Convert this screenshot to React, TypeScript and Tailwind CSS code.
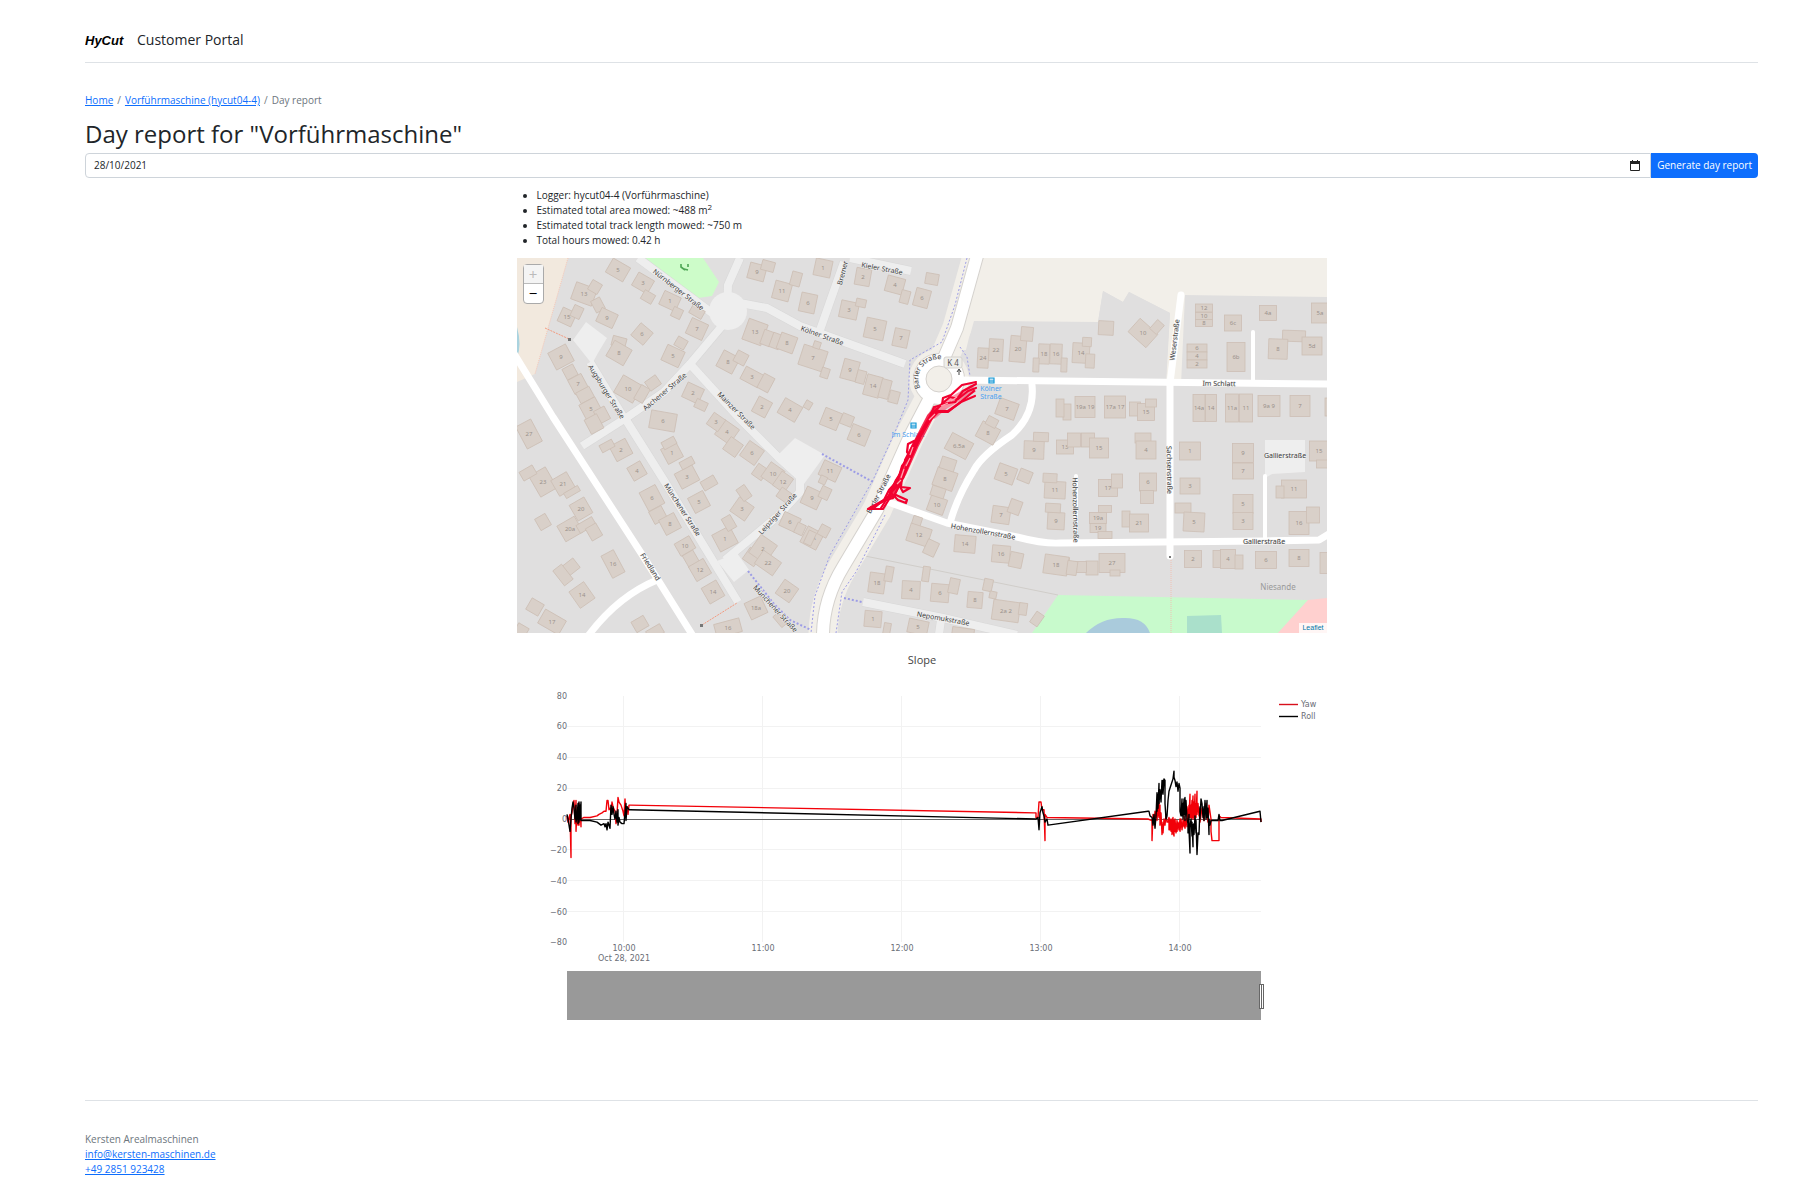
import React from 'react';

// x, y, width, height, rotation, house number
type Building = [number, number, number, number, number, string?];

const buildings: Building[] = [
  [618, 270, 20, 16, 30, '5'], [584, 294, 22, 18, 20, '13'], [595, 287, 11, 11, 30], [643, 283, 18, 15, 30, '3'],
  [648, 297, 12, 10, 30], [598, 305, 10, 13, -28], [607, 318, 18, 15, 25, '9'], [567, 317, 15, 15, 25, '15'],
  [577, 312, 10, 12, 25], [670, 301, 18, 15, 25, '1'], [677, 313, 10, 10, 25], [697, 312, 14, 9, 30],
  [697, 329, 18, 17, 25, '7'], [642, 334, 16, 16, 40, '6'], [619, 342, 14, 10, 15], [619, 353, 20, 18, 30, '8'],
  [681, 343, 11, 10, 30], [673, 356, 19, 17, 25, '5'], [561, 357, 20, 19, -28, '9'], [570, 372, 12, 12, -28],
  [578, 384, 15, 16, -28, '7'], [585, 395, 15, 12, -28], [591, 409, 18, 18, -28, '5'], [602, 415, 12, 14, -28],
  [628, 389, 22, 20, 30, '10'], [642, 394, 10, 16, 30], [653, 383, 13, 11, -35], [693, 393, 18, 16, 25, '2'],
  [701, 405, 12, 9, 25], [757, 272, 17, 16, 15, '9'], [768, 266, 13, 10, 15], [782, 291, 17, 18, 15, '11'],
  [796, 279, 10, 14, 15], [755, 332, 20, 22, 20, '13'], [767, 338, 10, 15, 20], [776, 341, 10, 15, 20],
  [787, 343, 17, 17, 20, '8'], [728, 362, 18, 18, 28, '8'], [741, 358, 12, 12, 28], [752, 377, 20, 14, 28, '3'],
  [766, 383, 12, 16, 28], [762, 407, 15, 17, 28, '2'], [790, 410, 20, 17, 30, '4'], [823, 268, 17, 17, 12, '1'],
  [808, 303, 16, 19, 12, '6'], [863, 277, 15, 17, 10, '2'], [895, 285, 18, 16, 15, '4'], [905, 297, 9, 13, 15],
  [932, 279, 13, 11, 10], [922, 298, 15, 18, 15, '6'], [849, 310, 18, 17, 12, '3'], [861, 303, 10, 8, 12],
  [875, 329, 20, 20, 12, '5'], [901, 338, 15, 18, 12, '7'], [813, 358, 25, 21, 18, '7'], [825, 373, 8, 10, 18],
  [850, 370, 16, 20, 15, '9'], [861, 377, 9, 13, 15], [873, 386, 16, 21, 15, '14'], [885, 389, 10, 19, 15],
  [894, 397, 10, 12, 15], [808, 405, 7, 8, 30], [831, 419, 18, 18, 22, '5'], [847, 420, 12, 11, 22],
  [859, 435, 19, 17, 22, '6'], [1007, 409, 20, 17, 20, '7'], [988, 433, 20, 17, 28, '8'], [992, 422, 11, 9, 28],
  [959, 446, 24, 18, 28, '6.5a'], [983, 358, 11, 20, 3, '24'], [996, 350, 14, 22, 3, '22'], [1018, 349, 16, 26, 5, '20'],
  [1027, 334, 12, 14, 5], [1044, 354, 11, 20, 2, '18'], [1056, 354, 12, 20, 2, '16'], [1036, 365, 6, 14, 2],
  [1064, 365, 6, 14, 2], [1081, 353, 17, 20, 3, '14'], [1090, 361, 9, 14, 3], [1087, 342, 9, 9, 3],
  [1106, 328, 15, 14, 3], [1143, 333, 24, 18, 42, '10'], [1157, 327, 9, 12, 42], [1204, 308, 17, 8, 0, '12'],
  [1204, 316, 17, 7, 0, '10'], [1204, 323, 17, 7, 0, '8'], [1233, 323, 17, 16, 0, '6c'], [1268, 313, 17, 15, 0, '4a'],
  [1320, 313, 17, 20, 0, '5a'], [1197, 348, 20, 8, 0, '6'], [1197, 356, 20, 8, 0, '4'], [1197, 364, 20, 8, 0, '2'],
  [1236, 357, 18, 29, 0, '6b'], [1294, 336, 23, 11, 2], [1278, 349, 19, 20, 2, '8'], [1312, 346, 20, 18, 0, '5d'],
  [1085, 407, 20, 21, 0, '19a 19'], [1115, 407, 21, 22, 0, '17a 17'], [1067, 412, 8, 16, 0], [1060, 408, 8, 18, 0],
  [1135, 409, 11, 14, 0], [1146, 412, 17, 17, 0, '15'], [1151, 403, 11, 8, 0], [1199, 408, 12, 27, 0, '14a'],
  [1211, 408, 11, 27, 0, '14'], [1232, 408, 13, 28, 0, '11a'], [1246, 408, 13, 28, 0, '11'], [1269, 406, 22, 21, 0, '9a 9'],
  [1300, 406, 20, 21, 0, '7'], [1330, 407, 10, 18, 0], [1065, 447, 17, 14, 0, '13'], [1074, 440, 13, 14, 0],
  [1088, 440, 13, 14, 0], [1099, 448, 19, 20, 0, '15'], [1143, 438, 16, 10, 0], [1146, 450, 20, 18, 0, '4'],
  [1190, 451, 21, 18, 0, '1'], [1243, 453, 21, 19, 0, '9'], [1243, 471, 21, 16, 0, '7'], [1319, 451, 19, 20, 0, '15'],
  [1322, 464, 11, 8, 0], [1108, 488, 19, 17, 0, '17'], [1117, 481, 11, 14, 0], [1148, 482, 17, 18, 0, '6'],
  [1147, 497, 13, 13, 0], [1190, 486, 20, 16, 0, '3'], [1183, 508, 16, 10, 0], [1194, 522, 21, 19, 3, '5'],
  [1243, 504, 20, 19, 0, '5'], [1243, 521, 20, 17, 0, '3'], [1294, 489, 25, 18, 0, '11'], [1280, 492, 8, 12, 0],
  [1299, 523, 20, 23, 0, '16'], [1313, 515, 13, 16, 0], [1105, 509, 13, 7, 0], [1098, 518, 17, 11, 0, '19a'],
  [1098, 528, 16, 9, 0, '19'], [1105, 535, 14, 7, 0], [1126, 519, 8, 16, 0], [1139, 523, 19, 18, 0, '21'],
  [1193, 559, 17, 17, 0, '2'], [1217, 559, 8, 17, 0], [1228, 559, 15, 19, 0, '4'], [1239, 562, 8, 14, 0],
  [1266, 560, 21, 17, 0, '6'], [1299, 558, 20, 17, 0, '8'], [1325, 563, 10, 21, 0], [1112, 563, 26, 19, 0, '27'],
  [1115, 573, 10, 6, 0], [1092, 568, 12, 14, 0], [1078, 567, 17, 11, 0], [1063, 565, 11, 16, 8],
  [830, 471, 19, 16, 25, '11'], [823, 480, 7, 8, 25], [812, 498, 18, 18, 25, '9'], [825, 493, 10, 12, 25],
  [812, 538, 18, 18, 28, '4A'], [824, 531, 10, 11, 28], [945, 479, 21, 19, 20, '8'], [948, 464, 15, 12, 18],
  [937, 505, 17, 16, 20, '10'], [938, 492, 14, 10, 18], [917, 521, 9, 9, 18], [919, 535, 22, 18, 18, '12'],
  [931, 548, 12, 15, 25], [1006, 474, 19, 17, 20, '5'], [1025, 476, 13, 12, 22], [1001, 515, 18, 17, 8, '7'],
  [1015, 507, 12, 14, 20], [1034, 450, 20, 18, 2, '9'], [1041, 437, 15, 9, 2], [1055, 490, 21, 17, 3, '11'],
  [1050, 478, 14, 9, 3], [1056, 521, 17, 17, 3, '9'], [1053, 508, 15, 9, 3], [965, 544, 21, 17, 5, '14'],
  [1001, 554, 18, 17, 5, '16'], [1016, 560, 13, 15, 12], [1056, 565, 24, 19, 8, '18'], [1072, 568, 10, 14, 8],
  [877, 583, 16, 20, 8, '18'], [889, 574, 8, 15, 10], [911, 590, 18, 18, 3, '4'], [926, 574, 7, 15, 8],
  [940, 593, 18, 18, 5, '6'], [954, 586, 10, 15, 12], [975, 600, 15, 16, 5, '8'], [988, 585, 9, 12, 12],
  [993, 595, 7, 7, 12], [1006, 611, 27, 20, 8, '2a 2'], [1023, 609, 8, 12, 8], [1037, 619, 9, 13, 35],
  [873, 619, 17, 16, 5, '1'], [887, 629, 7, 12, 10], [918, 627, 20, 14, 12, '5'], [963, 633, 22, 10, 8],
  [529, 434, 17, 25, -28, '27'], [543, 482, 19, 24, -30, '23'], [528, 473, 15, 10, -30], [563, 484, 18, 18, -30, '21'],
  [572, 492, 16, 6, -30], [581, 509, 17, 18, -30, '20'], [543, 522, 12, 13, -30], [570, 529, 20, 18, -30, '20a'],
  [586, 525, 18, 9, -30], [594, 532, 12, 14, -30], [613, 564, 14, 25, -28, '16'], [571, 567, 14, 12, -38],
  [563, 575, 11, 19, -38], [582, 595, 18, 20, -35, '14'], [535, 607, 14, 13, 30], [552, 622, 24, 16, 30, '17'],
  [521, 631, 12, 12, 30], [640, 624, 14, 12, -30], [655, 632, 16, 10, -30], [621, 450, 18, 17, -28, '2'],
  [607, 446, 14, 8, -28], [594, 424, 14, 16, -28], [637, 471, 15, 15, -30, '4'], [652, 498, 18, 21, -28, '6'],
  [658, 515, 14, 14, -28], [670, 524, 17, 17, -28, '8'], [663, 421, 26, 18, 10, '6'], [672, 453, 17, 17, -28, '1'],
  [669, 443, 14, 8, -28], [687, 477, 20, 17, -28, '3'], [687, 463, 14, 8, -28], [709, 483, 15, 10, -30],
  [699, 502, 17, 17, -28, '5'], [685, 546, 17, 14, -30, '10'], [691, 559, 12, 14, -30], [700, 570, 17, 17, -30, '12'],
  [713, 592, 17, 18, -30, '14'], [725, 539, 20, 19, -28, '1'], [729, 523, 10, 14, -30], [742, 509, 18, 17, 35, '3'],
  [744, 493, 10, 14, -35], [727, 432, 18, 18, 35, '4'], [716, 422, 14, 14, 35, '3'], [733, 447, 15, 15, 35],
  [752, 453, 18, 18, 35, '6'], [760, 472, 12, 13, 35], [773, 474, 17, 18, 35, '10'], [783, 482, 14, 17, 35, '12'],
  [784, 495, 12, 11, 35], [790, 522, 18, 15, 25, '6'], [800, 529, 9, 11, 25], [810, 538, 8, 14, 25],
  [752, 557, 14, 14, 35], [763, 549, 20, 22, 35, '2'], [768, 563, 22, 16, 35, '22'], [787, 591, 17, 17, 35, '20'],
  [756, 608, 18, 18, -25, '18a'], [780, 620, 14, 7, 50], [728, 628, 26, 14, -15, '16'], [817, 345, 7, 7, 18],
];

// text, x, y, rotation
type StreetLabel = [string, number, number, number];

const streetLabels: StreetLabel[] = [
  ['Nürnberger Straße', 678, 290, 38],
  ['Augsburger Straße', 606, 392, 58],
  ['Aachener Straße', 665, 392, -40],
  ['Mainzer Straße', 736, 411, 45],
  ['Münchener Straße', 682, 510, 57],
  ['Leipziger Straße', 778, 514, -48],
  ['Friedland', 650, 567, 58],
  ['Münchener Straße', 775, 609, 47],
  ['Kölner Straße', 822, 336, 20],
  ['Kieler Straße', 882, 269, 11],
  ['Bremer', 843, 273, -75],
  ['Barler Straße', 879, 494, -62],
  ['Im Schlatt', 1219, 384, 1],
  ['Weserstraße', 1175, 340, -83],
  ['Sachsenstraße', 1169, 470, 89],
  ['Hohenzollernstraße', 1075, 510, 89],
  ['Hohenzollernstraße', 983, 532, 10],
  ['Gallierstraße', 1264, 542, 0],
  ['Gallierstraße', 1285, 456, 0],
  ['Nepomukstraße', 943, 619, 10],
];

const residentialRoads = [
  'M638 258 L712 313',
  'M740 258 L728 285 L727 312',
  'M727 320 L690 364 L664 392 L626 418 L582 446',
  'M690 364 L740 419 L778 457 L798 475',
  'M590 362 L624 418',
  'M626 420 L665 482 L738 602',
  'M800 475 L800 492 L778 516 L725 560',
  'M740 303 L767 308 L800 326 L905 364',
  'M844 262 L820 330',
  'M850 258 L911 271',
  'M863 602 L943 618 L1017 635',
  'M941 620 L939 634',
];

const mainRoads = [
  'M513 352 L553 417 L643 556 L693 636',
  'M657 580 Q618 596 588 636',
  'M960 380 L1327 384',
  'M1032 385 Q1035 414 1012 435 Q982 455 974 470 Q957 497 950 523',
  'M888 502 L947 523 L1017 537 Q1044 544 1060 543 L1263 541 L1319 540 L1329 534',
  'M1181 295 L1170 383 L1170 556',
];

const sideRoads = ['M1076 476 V543', 'M1253 332 V383', 'M1265 476 V541'];

const barlerStrasse = 'M977 256 L957 328 L944 358 M933 392 L910 436 L893 474 L877 510 L843 567 Q823 600 823 636';

const mowedTracks = [
  'M976 382 L962 385 L951 395 L943 398 L942 405 L934 407 L930 416 L922 430 L914 443 L905 460',
  'M976 384 L963 391 L955 402 L942 404 L933 413 L925 428 L917 441 L911 452',
  'M974 391 L957 405 L948 412 L937 412 L928 423 L919 438 L912 450 L908 466',
  'M975 396 L961 402 L948 411 L938 411 L930 420 L920 436 L908 456',
  'M976 388 L968 391 L958 399 L950 397 L944 402',
  'M914 441 L908 444 L907 452 L910 456 L902 466 L898 480 L889 490 L884 500 L868 509 L883 509 L891 496',
  'M927 425 L914 447 L906 468 L900 484 L893 498 L886 500 L870 508',
  'M920 438 L911 458 L903 478 L897 484 L888 497 L881 508',
  'M905 461 L900 474 L896 480 L890 493 L899 485 L903 492 L910 488 L901 487 L902 477',
  'M890 492 L898 500 L906 503 L907 500 L896 495 L888 497 L880 503 L874 508',
];

const yTicks = [80, 60, 40, 20, 0, -20, -40, -60, -80];
const xTicks = [
  { label: '10:00', x: 623 },
  { label: '11:00', x: 762 },
  { label: '12:00', x: 901 },
  { label: '13:00', x: 1040 },
  { label: '14:00', x: 1179 },
];

// x position followed by the measured angle in degrees
const yaw: number[][] = [
  [567, 2], [568, -2], [569, 1], [570, 3], [571, -25], [571, 2], [572, 4], [573, 9], [574, 12], [575, -3], [576, 12],
  [576, -8], [577, 5], [578, -4], [579, 10], [579, -4], [580, 8], [581, -5], [581, 0], [584, 1], [590, 1], [597, 2],
  [599, 3], [602, 4], [604, 5], [606, 5], [607, 12], [608, 12], [609, 6], [610, 7], [611, 5], [612, 11], [613, 8],
  [615, 5], [616, -3], [617, 3], [618, 14], [619, 11], [621, 9], [623, 5], [624, 2], [625, 13], [626, 3], [627, 8],
  [628, 3], [629, 9], [630, 9], [1034, 4], [1036, 4], [1036, 1], [1038, 1], [1039, 11], [1041, 11], [1042, 6],
  [1044, 6], [1045, -14], [1045, 3], [1047, 1], [1148, 0], [1152, -1], [1152, -14], [1153, 3], [1154, -3], [1155, 5],
  [1156, 1], [1157, 8], [1157, -1], [1158, 11], [1158, 2], [1159, 11], [1159, 1], [1160, 9], [1160, -4], [1161, 4],
  [1162, -10], [1162, -2], [1163, -9], [1164, 0], [1165, -4], [1166, 3], [1167, -2], [1168, -2], [1169, 1], [1169, -7],
  [1170, 0], [1170, -7], [1171, -1], [1171, -8], [1172, 0], [1172, -10], [1173, 1], [1173, -8], [1174, -11], [1174, -1],
  [1175, -8], [1175, 0], [1176, -9], [1177, -1], [1177, -8], [1178, -2], [1179, -7], [1180, 0], [1180, -8], [1181, 0],
  [1182, -7], [1183, -1], [1184, -5], [1184, 2], [1185, -6], [1186, 0], [1187, -5], [1187, 8], [1188, 0], [1189, 9],
  [1189, 1], [1190, 16], [1190, 1], [1191, 9], [1191, 1], [1192, 12], [1192, 0], [1193, 15], [1193, 1], [1194, 11],
  [1194, 0], [1195, 16], [1195, 2], [1196, 10], [1196, 1], [1197, 18], [1197, 3], [1198, 10], [1199, 2], [1200, 7],
  [1200, -2], [1202, 7], [1204, -1], [1206, 10], [1208, -2], [1209, 9], [1211, 0], [1211, -8], [1212, -14],
  [1218, -14], [1219, -14], [1219, 2], [1221, 1], [1261, 0], [1261, -2],
];

const roll: number[][] = [
  [567, 3], [568, 0], [569, -4], [570, -8], [571, 0], [572, 7], [573, 11], [574, 7], [575, 0], [576, 9], [576, -2],
  [577, 1], [578, 10], [578, -3], [579, 11], [579, -2], [580, 9], [580, 0], [581, 11], [581, -1], [590, -1],
  [597, -2], [599, -3], [601, -4], [604, -3], [605, -5], [606, -3], [607, -7], [608, -2], [610, -6], [611, 9],
  [612, 3], [613, 8], [614, 3], [615, 0], [616, 5], [617, -2], [618, 6], [618, -4], [619, 1], [620, -2], [622, -3],
  [624, -3], [625, 4], [626, 10], [626, -1], [627, 8], [629, 6], [630, 6], [1036, 0], [1038, 1], [1039, -7],
  [1040, 4], [1041, 6], [1042, 8], [1043, 4], [1044, 2], [1045, -2], [1047, 0], [1048, -4], [1148, 5], [1149, 5],
  [1150, 2], [1152, 1], [1153, -4], [1154, 3], [1155, -6], [1156, 2], [1157, 17], [1157, 5], [1158, 16], [1158, 7],
  [1159, 23], [1159, 10], [1160, 19], [1161, 11], [1162, 25], [1162, 17], [1163, 25], [1163, 16], [1164, 26],
  [1165, 25], [1165, 10], [1166, 0], [1167, 2], [1168, 12], [1169, 18], [1171, 22], [1173, 26], [1174, 31],
  [1174, 27], [1175, 25], [1176, 21], [1177, 24], [1178, 18], [1179, 23], [1180, 20], [1180, 5], [1181, 2],
  [1182, 13], [1182, 2], [1183, 10], [1183, 0], [1184, 13], [1184, 3], [1185, 14], [1185, -1], [1186, 12],
  [1187, 0], [1188, -3], [1188, -9], [1189, 3], [1189, -7], [1190, -22], [1190, -5], [1191, 0], [1192, -11],
  [1192, -2], [1193, -18], [1193, -4], [1194, -3], [1194, -10], [1195, 2], [1196, -9], [1196, -1], [1197, -23],
  [1198, -9], [1199, -10], [1200, 8], [1200, 0], [1201, 13], [1202, 10], [1203, 1], [1204, 8], [1204, -1],
  [1205, 12], [1206, 0], [1207, 12], [1207, 1], [1208, 7], [1209, -10], [1209, 0], [1210, -4], [1211, -1],
  [1218, -1], [1219, 3], [1220, -1], [1222, -1], [1260, 5], [1261, -2],
];

const degreeToY = (degrees: number) => 819 - degrees * 1.5433;

const toPoints = (series: number[][]) => series.map(([x, degrees]) => `${x},${degreeToY(degrees)}`).join(' ');

const linkClass = 'text-[#0d6efd] underline';

function Header() {
  return (
    <header className="flex items-center gap-3 border-b border-[#dee2e6] pt-6 pb-[6px]">
      <a href="#" aria-label="HyCut" className="block">
        <svg viewBox="0 0 40 28" className="h-7 w-10" role="img" aria-hidden="true">
          <text x="0" y="19" className="fill-black font-['Liberation_Sans',sans-serif] text-[13px] font-bold italic">
            HyCut
          </text>
        </svg>
      </a>
      <span className="text-[14px] leading-8">Customer Portal</span>
    </header>
  );
}

function Breadcrumb() {
  return (
    <nav aria-label="breadcrumb">
      <ol className="flex gap-1 text-[#6c757d]">
        <li><a href="#" className={linkClass}>Home</a></li>
        <li className="flex gap-1"><span>/</span><a href="#" className={linkClass}>Vorführmaschine (hycut04-4)</a></li>
        <li className="flex gap-1"><span>/</span><span>Day report</span></li>
      </ol>
    </nav>
  );
}

function DateForm() {
  return (
    <form className="flex h-[25px]" onSubmit={(event) => event.preventDefault()}>
      <div className="flex flex-1 items-center rounded-l-sm border border-[#ced4da] pr-[10px] pl-2">
        <input aria-label="Report date" defaultValue="28/10/2021" className="min-w-0 flex-1 outline-none" />
        <button type="button" aria-label="Open calendar">
          <svg viewBox="0 0 10 11" className="h-[11px] w-[10px]">
            <path d="M.5 2.500h9v8h-9z" fill="none" stroke="#222" />
            <path d="M0 1h10v3H0zM2 0h1v2H2zM7 0h1v2H7z" fill="#222" />
          </svg>
        </button>
      </div>
      <button type="submit" className="rounded-r-sm bg-[#0d6efd] px-[6px] text-white">
        Generate day report
      </button>
    </form>
  );
}

function StreetMap() {
  return (
    <div className="relative">
      <svg viewBox="517 258 810 375" className="block w-full bg-[#e0dfdf]" role="img" aria-label="Map of mowed tracks">
        {/* Fields, parks and water */}
        <path d="M517 258 H568 L535 374 L517 382z" fill="#f2e9de" />
        <path d="M568 258 L535 374" stroke="#f5c8b8" strokeDasharray="1 1" fill="none" />
        <path d="M517 327 Q522 345 517 358z" fill="#aad3df" />
        <path d="M978 258 H1327 V297 L1185 295 L1181 385 H1166 L1170 313 L1129 292 L1123 302 L1103 291 L1098 322 L973 321 L966 350 L955 350z" fill="#f2efe9" />
        <path d="M1098 322 L1103 291 L1123 302 L1129 292 L1170 313 L1166 374 L1160 379 H1098z" fill="#e0dfdf" />
        <path d="M645 258 H703 L719 282 L712 296 L698 298z" fill="#cdfcc9" />
        <path d="M681 264 v3 l4 3 M688 264 v3 M684 269 l4 1" fill="none" stroke="#4da654" strokeWidth="1.6" />
        <path d="M1058 595 L1308 600 L1278 633 H1032z" fill="#c8facc" />
        <path d="M1308 600 L1327 598 V633 H1278z" fill="#ffd0cf" />
        <path d="M1086 633 Q1102 617 1125 618 Q1145 618 1150 633z" fill="#aacbdc" />
        <path d="M1187 616 L1221 615 L1222 633 H1187z" fill="#aae0cb" />
        <path d="M865 556 L930 569 L1058 595" fill="none" stroke="#d0cdc9" />
        <path d="M1171 560 V633" fill="none" stroke="#f0c0b4" strokeDasharray="1 1" />

        {/* Verge along the through road */}
        <path d={barlerStrasse} fill="none" stroke="#f2efe9" strokeWidth="29" />
        <circle cx="939" cy="379" r="30" fill="#f2efe9" />
        <path d={barlerStrasse} fill="none" stroke="#d5d2ce" strokeWidth="14" />
        <circle cx="939" cy="379" r="26" fill="#d5d2ce" />

        <g fill="none" stroke="#d8d8d8" strokeWidth="9" strokeLinejoin="round">
          {residentialRoads.map((road) => <path key={road} d={road} />)}
        </g>
        <g fill="none" stroke="#eeeeee" strokeWidth="8" strokeLinejoin="round">
          {residentialRoads.map((road) => <path key={road} d={road} />)}
        </g>
        <g fill="#eeeeee">
          <circle cx="728" cy="311" r="19" />
          <path d="M573 340 L586 322 L607 338 L598 353 L592 364z" />
          <path d="M777 456 L795 438 L825 455 L804 484 L797 480z" />
          <path d="M717 561 L737 553 L749 570 L734 582z" />
          <path d="M1265 440 H1305 V472 L1272 474 L1265 478z" />
        </g>

        <g fill="none" stroke="#ffffff" strokeLinejoin="round">
          <g strokeWidth="7">{mainRoads.map((road) => <path key={road} d={road} strokeLinecap="round" />)}</g>
          <g strokeWidth="4">{sideRoads.map((road) => <path key={road} d={road} strokeLinecap="round" />)}</g>
          <path d={barlerStrasse} strokeWidth="12" />
        </g>
        <circle cx="939" cy="379" r="19" fill="#f2efe9" stroke="#ffffff" strokeWidth="12" />
        <circle cx="939" cy="379" r="13" fill="#f2efe9" stroke="#d5d2ce" />

        {/* Foot and cycle paths */}
        <g fill="none" stroke="#9c9ce6" strokeDasharray="2 2" strokeWidth="1">
          <path d="M967 258 L955 305 L942 342 L910 360 L908 400 L895 432 L873 480 L830 555 L815 596 L811 633" />
          <path d="M960 347 L967 357 L970 376 M885 515 L856 572 L842 592 L836 633" />
          <path d="M822 454 L873 482 M844 598 L862 602" strokeWidth="2" />
          <path d="M748 571 L774 604 L790 620 L811 630" strokeWidth="2" />
        </g>
        <path d="M545 328 L569 339 M702 625 L737 603" fill="none" stroke="#f39b80" strokeDasharray="2 1" />
        <path d="M568 338h3v3h-3zM700 624h3v3h-3zM1169 556h2v2h-2z" fill="#777" />

        {buildings.map(([x, y, width, height, angle, number]) => (
          <g key={`${x}-${y}`}>
            <rect
              x={x - width / 2}
              y={y - height / 2}
              width={width}
              height={height}
              transform={`rotate(${angle} ${x} ${y})`}
              fill="#d9d0c9"
              stroke="#cdbfb5"
              strokeWidth="0.8"
            />
            {number && (
              <text x={x} y={y + 2} textAnchor="middle" className="fill-[#99918b] font-['Noto_Sans',sans-serif] text-[6px]">
                {number}
              </text>
            )}
          </g>
        ))}

        <g textAnchor="middle" className="fill-[#3a3a3a] stroke-[#f0f0f0] stroke-1 font-['Noto_Sans',sans-serif] text-[7px] [paint-order:stroke]">
          {streetLabels.map(([name, x, y, angle]) => (
            <text key={`${name}-${x}`} x={x} y={y + 2} transform={`rotate(${angle} ${x} ${y})`}>
              {name}
            </text>
          ))}
          <path id="roundabout" d="M924 393 A20 20 0 0 1 947 361" fill="none" stroke="none" />
          <text>
            <textPath href="#roundabout" startOffset="50%">Barler Straße</textPath>
          </text>
        </g>
        <text x="1278" y="590" textAnchor="middle" className="fill-[#999] font-['Noto_Sans',sans-serif] text-[8px]">Niesande</text>
        <rect x="944" y="357" width="18" height="11" rx="2" fill="#eeeeea" stroke="#d5d2ce" />
        <text x="953" y="366" textAnchor="middle" className="fill-[#555] font-['Noto_Sans',sans-serif] text-[8px]">K 4</text>
        <path d="M959 375 v-5 m-2 2 l2 -3 l2 3" fill="none" stroke="#444" />

        <g textAnchor="middle" className="fill-[#4b9ff0] font-['Noto_Sans',sans-serif] text-[7px]">
          <text x="991" y="391">Kölner</text>
          <text x="991" y="399">Straße</text>
          <text x="908" y="437">Im Schlatt</text>
        </g>
        <path d="M989 378h5v5h-5zM911 423h5v5h-5z" fill="#bfe3f5" stroke="#1899d6" strokeWidth="1.2" />
        <path d="M989 381h5M911 426h5" stroke="#1899d6" />

        <path d="M974 388 L945 405 L932 416" fill="none" stroke="#ff0033" strokeWidth="8" strokeOpacity="0.4" />
        <path d="M938 409 L930 417 L915 446 L903 473 L890 498" fill="none" stroke="#fa0030" strokeWidth="7" strokeOpacity="0.8" strokeLinejoin="round" />
        <g fill="none" stroke="#f2002f" strokeWidth="2.2" strokeLinejoin="round" strokeLinecap="round">
          {mowedTracks.map((track) => <path key={track} d={track} />)}
        </g>
        <path
          d="M957 397 l-6 4 M948 403 l-7 3 M935 414 l-6 6 M913 447 l-3 8 M910 458 l-4 8 M904 469 l-3 9 M901 480 l-4 4"
          fill="none"
          stroke="#ffa6b0"
          strokeWidth="1.2"
        />
      </svg>

      <div className="absolute top-[6px] left-[6px] flex w-[21px] flex-col rounded-sm border border-[#aaa] bg-white text-[15px] leading-none">
        <button type="button" aria-label="Zoom in" className="h-[19px] border-b border-[#bbb] bg-[#f4f4f4] text-[#bbb]">+</button>
        <button type="button" aria-label="Zoom out" className="h-[19px] text-black">−</button>
      </div>
      <a href="#" className="absolute right-0 bottom-0 bg-white/80 px-[3px] font-['Liberation_Sans',sans-serif] text-[7px] leading-[10px] text-[#0078a8]">
        Leaflet
      </a>
    </div>
  );
}

function SlopeChart() {
  return (
    <svg viewBox="517 633 810 404" className="block w-full font-['DejaVu_Sans',sans-serif]" role="img" aria-label="Slope">
      <text x="922" y="664" textAnchor="middle" className="fill-[#444] font-['Open_Sans',sans-serif] text-[11px]">Slope</text>

      <g stroke="#f2f2f2" shapeRendering="crispEdges">
        {yTicks.slice(1, -1).map((tick) => (
          <line key={tick} x1="567" x2="1261" y1={degreeToY(tick)} y2={degreeToY(tick)} />
        ))}
        {xTicks.map(({ x }) => <line key={x} x1={x} x2={x} y1="696" y2="942" />)}
        <line x1="567" x2="1261" y1="819" y2="819" stroke="#666" />
      </g>

      <g className="fill-[#6a6d76] text-[8px]">
        {yTicks.map((tick) => (
          <text key={tick} x="567" y={degreeToY(tick) + 3} textAnchor="end">{String(tick).replace('-', '−')}</text>
        ))}
        {xTicks.map(({ label, x }) => (
          <text key={label} x={x + 1} y="951" textAnchor="middle">{label}</text>
        ))}
        <text x="624" y="961" textAnchor="middle">Oct 28, 2021</text>
        <text x="1301" y="707">Yaw</text>
        <text x="1301" y="719">Roll</text>
      </g>

      <g fill="none" strokeWidth="1.4" strokeLinejoin="round">
        <polyline points={toPoints(yaw)} stroke="#f20008" />
        <polyline points={toPoints(roll)} stroke="#000000" />
        <path d="M1279 704.5h19" stroke="#d8101c" />
        <path d="M1279 716.5h19" stroke="#000000" />
      </g>

      {/* Range slider */}
      <rect x="567" y="971" width="694" height="49" fill="#999999" />
      <rect x="1259.5" y="984.5" width="4" height="24" fill="#ffffff" stroke="#666666" />
      <path d="M1261.5 985v23" stroke="#666666" />
    </svg>
  );
}

function Footer() {
  return (
    <footer className="mt-[63px] border-t border-[#dee2e6] pt-[31px] pb-1 text-[#6c757d]">
      <p>Kersten Arealmaschinen</p>
      <p><a href="mailto:info@kersten-maschinen.de" className={linkClass}>info@kersten-maschinen.de</a></p>
      <p><a href="tel:+492851923428" className={linkClass}>+49 2851 923428</a></p>
    </footer>
  );
}

export default function App() {
  return (
    <div className="min-h-screen bg-white pr-11 pl-[85px] font-['Open_Sans',sans-serif] text-[10px] leading-[15px] text-[#212529]">
      <Header />
      <main className="pt-[30px]">
        <Breadcrumb />
        <h1 className="mt-[11px] mb-1 text-[24px] leading-[30px] font-medium">Day report for "Vorführmaschine"</h1>
        <DateForm />
        <div className="mx-auto mt-[10px] max-w-[810px]">
          <ul className="mb-[10px] list-disc pl-5">
            <li>Logger: hycut04-4 (Vorführmaschine)</li>
            <li>Estimated total area mowed: ~488 m<sup className="text-[8px] leading-none">2</sup></li>
            <li>Estimated total track length mowed: ~750 m</li>
            <li>Total hours mowed: 0.42 h</li>
          </ul>
          <StreetMap />
          <SlopeChart />
        </div>
      </main>
      <Footer />
    </div>
  );
}
